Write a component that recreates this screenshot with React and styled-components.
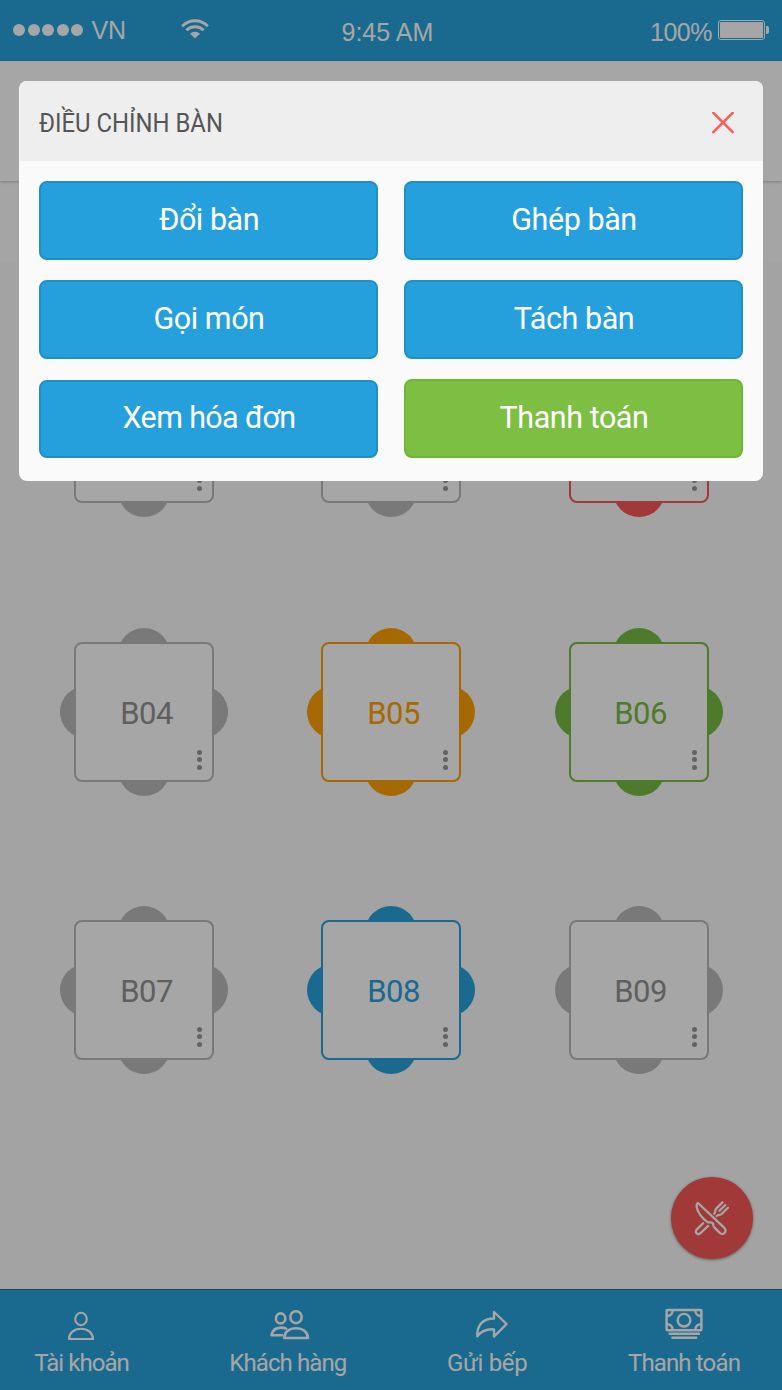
import React from 'react';
import styled, { createGlobalStyle } from 'styled-components';

const Global = createGlobalStyle`
  * { box-sizing: border-box; }
  body { margin: 0; }
`;

const tones = {
  gray: { line: '#bababa', text: '#939393' },
  red: { line: '#f75856', text: '#f75856' },
  orange: { line: '#ffa000', text: '#ffa000' },
  green: { line: '#78bc42', text: '#78bc42' },
  blue: { line: '#28a2dc', text: '#28a2dc' },
};

const Screen = styled.div`
  position: relative;
  width: 782px;
  height: 1390px;
  overflow: hidden;
  display: flex;
  flex-direction: column;
  background: #fafafa;
  font-family: Roboto, "Noto Sans", sans-serif;
`;

const StatusBar = styled.header`
  height: 61px;
  flex: none;
  display: grid;
  grid-template-columns: 328.5px auto 1fr;
  align-items: start;
  padding: 0 13px;
  background: #28a2dc;
  color: #fff;
  font: 25px/30px "Liberation Sans", sans-serif;
`;

const StatusGroup = styled.div`
  display: flex;
  justify-content: ${(p) => (p.$end ? 'flex-end' : 'flex-start')};
  padding-top: ${(p) => p.$top}px;
  letter-spacing: ${(p) => (p.$end ? '-0.5px' : 'normal')};
`;

const Signal = styled.div`
  display: flex;
  gap: 2.6px;
  margin: 9px 8px 0 0;
`;

const SignalDot = styled.i`
  width: 12px;
  height: 12px;
  border-radius: 50%;
  background: #fff;
`;

const WifiIcon = styled.svg`
  margin: 4px 0 0 55px;
`;

const BatteryIcon = styled.svg`
  margin: 2px 0 0 5px;
`;

const TitleBar = styled.div`
  height: 120px;
  flex: none;
  background: #fff;
  box-shadow: 0 1px 3px rgba(0, 0, 0, 0.25);
  z-index: 1;
`;

const FilterBar = styled.div`
  height: 81px;
  flex: none;
  background: #fefefe;
`;

const Floor = styled.main`
  flex: 1;
  display: grid;
  grid-template-columns: 247px 248px 168px;
  grid-template-rows: 279px 278px 168px;
  align-items: start;
  justify-items: start;
  padding: 87px 0 0 60px;
`;

const TableUnit = styled.div`
  position: relative;
  width: 168px;
  height: 168px;
  padding: 14px;
`;

const Chair = styled.i`
  position: absolute;
  width: 52px;
  height: 52px;
  border-radius: 50%;
  background: ${(p) => tones[p.$tone].line};
  ${(p) => ({
    top: `top: 0; left: ${p.$x}px;`,
    bottom: `bottom: 0; left: ${p.$x}px;`,
    left: 'left: 0; top: 58.4px;',
    right: 'right: 0; top: 58.4px;',
  }[p.$side])}
`;

const TableTop = styled.div`
  position: relative;
  width: 140px;
  height: 140px;
  display: flex;
  align-items: center;
  justify-content: center;
  padding: 4px 0 0 ${(p) => (p.$last ? 3 : 5)}px;
  border: 2px solid ${(p) => tones[p.$tone].line};
  border-radius: 8px;
  background: #fff;
  color: ${(p) => tones[p.$tone].text};
  font-size: 31px;
  line-height: 36px;
  letter-spacing: -0.5px;
`;

const More = styled.span`
  position: absolute;
  right: ${(p) => (p.$middle ? 11 : 10)}px;
  bottom: ${(p) => (p.$raised ? 11 : 10)}px;
  display: grid;
  gap: 2.6px;
`;

const MoreDot = styled.i`
  width: 5px;
  height: 5px;
  border-radius: 50%;
  background: #999;
`;

const Fab = styled.div`
  position: absolute;
  left: 671px;
  top: 1177px;
  width: 82px;
  height: 82px;
  border-radius: 50%;
  display: grid;
  place-items: center;
  background: #f75856;
  box-shadow: 0 1px 3px rgba(0, 0, 0, 0.45);
`;

const BottomNav = styled.nav`
  height: 101px;
  flex: none;
  display: flex;
  justify-content: space-between;
  padding: 0 42px 0 34px;
  border-top: 1px solid #16719f;
  background: #28a2dc;
  color: #fff;
`;

const NavItem = styled.div`
  width: ${(p) => p.$w}px;
  display: flex;
  flex-direction: column;
  align-items: center;
  font-size: 24px;
  line-height: 28px;
  white-space: nowrap;
`;

const NavGlyph = styled.div`
  height: 59px;
  display: flex;
  align-items: center;
  padding-top: ${(p) => p.$top}px;
  padding-left: ${(p) => Math.max(p.$dx, 0) * 2}px;
  padding-right: ${(p) => Math.max(-p.$dx, 0) * 2}px;
`;

const NavText = styled.span`
  letter-spacing: ${(p) => p.$track}px;
`;

const Overlay = styled.div`
  position: absolute;
  inset: 0;
  z-index: 2;
  background: rgba(0, 0, 0, 0.35);
`;

const Dialog = styled.section`
  position: absolute;
  left: 19px;
  top: 81px;
  z-index: 3;
  width: 744px;
  height: 400px;
  border-radius: 8px;
  overflow: hidden;
  background: #fafafa;
`;

const DialogHead = styled.div`
  height: 80px;
  display: flex;
  align-items: center;
  justify-content: space-between;
  margin-left: 1px;
  padding: 3px 29px 0 19px;
  background: #eee;
`;

const DialogTitle = styled.h1`
  margin: 0;
  font-size: 26px;
  line-height: 32px;
  font-weight: 400;
  color: #555;
  transform: scaleX(0.918);
  transform-origin: left;
  white-space: nowrap;
`;

const Actions = styled.div`
  display: grid;
  grid-template-columns: 339px 339px;
  grid-template-rows: 79px 79px 79px;
  column-gap: 26px;
  row-gap: 20px;
  padding: 20px;
`;

const Action = styled.button`
  margin: ${(p) => (p.$inset ? '1px 0 0' : '0')};
  padding: 0 0 ${(p) => (p.$inset ? 3 : 2)}px 1px;
  border: 2px solid ${(p) => (p.$green ? '#70b533' : '#1d90cb')};
  border-radius: 8px;
  background: ${(p) => (p.$green ? '#7dbf42' : '#26a0dc')};
  color: #fff;
  font: 30.5px/36px Roboto, "Noto Sans", sans-serif;
  letter-spacing: ${(p) => p.$track || -0.45}px;
`;

const Stroke = ({ w, h, sw = 2, children }) => (
  <svg width={w} height={h} viewBox={`0 0 ${w} ${h}`} fill="none" stroke="#fff" strokeWidth={sw} strokeLinecap="round" strokeLinejoin="round">
    {children}
  </svg>
);

const UserIcon = () => (
  <Stroke w={30} h={32} sw={2.1}>
    <ellipse cx="15" cy="10" rx="5.8" ry="6.2" />
    <path d="M3 30C3 24 8 19.7 15 19.7S27 24 27 30Z" />
  </Stroke>
);

const UsersIcon = () => (
  <Stroke w={44} h={33} sw={2.6}>
    <ellipse cx="28" cy="9.2" rx="5.7" ry="6" />
    <path d="M16.2 30C16.6 24 21 20.2 28 20.2S39.6 24 40 30Z" />
    <ellipse cx="12.6" cy="10.4" rx="4.7" ry="5" />
    <path d="M18 20.6C16.3 19.7 14.7 19.5 13 19.6C7.8 19.8 4.2 22.6 3.5 27.2H14" />
  </Stroke>
);

const SendIcon = () => (
  <Stroke w={36} h={32} sw={2.4}>
    <path d="M20 4L32.6 16L20 28.6V21.4C12 20.8 7 23.4 3.3 28.3C2.8 17 9 10.5 20 10.5Z" />
  </Stroke>
);

const MoneyIcon = () => (
  <Stroke w={40} h={32} sw={2.4}>
    <rect x="2.6" y="2" width="34.8" height="20.2" rx="0.8" />
    <circle cx="20" cy="12.2" r="6.3" />
    <path d="M8.6 2.5C8.6 5.8 6.4 8 3 8M31.4 2.5C31.4 5.8 33.6 8 37 8M3 16.2C6.4 16.2 8.6 18.4 8.6 21.7M37 16.2C33.6 16.2 31.4 18.4 31.4 21.7" />
    <path d="M5.6 25.8H35M8.4 29.7H32.2" />
  </Stroke>
);

const CutleryIcon = () => (
  <Stroke w={40} h={40} sw={2.3}>
    <path d="M6 5C4.2 5.4 4.5 8.3 5 10.3C6.5 16 10.5 20.5 15.6 24.1C17.8 25 20.3 23.5 21.1 26C21.4 27.6 21.2 28.2 22.6 29.6L27.6 34.8C28.8 36 31 36.4 32.4 35.2C34 33.7 33.7 31.3 32.6 30.2Z" />
    <path d="M11.2 25.2L4.9 31.3C3.6 32.7 3.4 34.4 4.6 35.4C5.7 36.4 7.4 36.2 8.6 35L16.2 27.9" />
    <path d="M30.5 4.2L24.2 10.6C22.6 12.3 24.1 13.8 22.2 15.7M36 9.7L29.8 15.8C28 17.6 26.6 16 24.6 18M33.3 7L27.4 12.8" />
  </Stroke>
);

const tables = [
  { tone: 'gray' }, { tone: 'gray' }, { tone: 'red' },
  { name: 'B04', tone: 'gray' }, { name: 'B05', tone: 'orange' }, { name: 'B06', tone: 'green' },
  { name: 'B07', tone: 'gray' }, { name: 'B08', tone: 'blue' }, { name: 'B09', tone: 'gray' },
];

const Table = ({ name, tone, index }) => {
  const col = index % 3;
  return (
    <TableUnit>
      {['top', 'bottom', 'left', 'right'].map((s) => (
        <Chair key={s} $side={s} $tone={tone} $x={col === 2 ? 57.5 : 58.4} />
      ))}
      <TableTop $tone={tone} $last={col === 2}>
        {name}
        <More $middle={col === 1} $raised={index > 5}><MoreDot /><MoreDot /><MoreDot /></More>
      </TableTop>
    </TableUnit>
  );
};

const navItems = [
  { label: 'Tài khoản', Icon: UserIcon, w: 95, track: -0.95, dx: -0.5, top: 11 },
  { label: 'Khách hàng', Icon: UsersIcon, w: 117, track: -0.9, dx: 2, top: 9 },
  { label: 'Gửi bếp', Icon: SendIcon, w: 81, track: -0.35, dx: 5, top: 8 },
  { label: 'Thanh toán', Icon: MoneyIcon, w: 112, track: -0.85, dx: 0, top: 9 },
];

export default function App() {
  return (
    <Screen>
      <Global />
      <StatusBar>
        <StatusGroup $top={15}>
          <Signal>{[0, 1, 2, 3, 4].map((i) => <SignalDot key={i} />)}</Signal>
          VN
          <WifiIcon width="28" height="20" viewBox="0 0 28 20" fill="none" stroke="#fff" strokeWidth="2.9">
            <path d="M1.2 7.2C8.5 0 19.5 0 26.8 7.2" />
            <path d="M5.4 11.3C10.2 6.6 17.8 6.6 22.6 11.3" />
            <path d="M9 14.8C11.6 12 16.4 12 19 14.8L14 19.5Z" fill="#fff" stroke="none" />
          </WifiIcon>
        </StatusGroup>
        <StatusGroup $top={17}>9:45 AM</StatusGroup>
        <StatusGroup $top={17} $end>
          100%
          <BatteryIcon width="52" height="22" viewBox="0 0 52 22">
            <rect x="1.5" y="1.5" width="46" height="19" rx="2.5" fill="none" stroke="#fff" />
            <rect x="3" y="3" width="43" height="16" rx="1" fill="#fff" />
            <path d="M49 7H50Q52 7 52 9V13Q52 15 50 15H49Z" fill="#fff" />
          </BatteryIcon>
        </StatusGroup>
      </StatusBar>
      <TitleBar />
      <FilterBar />
      <Floor>
        {tables.map((t, i) => <Table key={i} index={i} {...t} />)}
      </Floor>
      <Fab><CutleryIcon /></Fab>
      <BottomNav>
        {navItems.map(({ label, Icon, w, track, dx, top }) => (
          <NavItem key={label} $w={w}>
            <NavGlyph $dx={dx} $top={top}><Icon /></NavGlyph>
            <NavText $track={track}>{label}</NavText>
          </NavItem>
        ))}
      </BottomNav>
      <Overlay />
      <Dialog>
        <DialogHead>
          <DialogTitle>ĐIỀU CHỈNH BÀN</DialogTitle>
          <svg width="22" height="22" viewBox="0 0 22 22" stroke="#ff5a54" strokeWidth="2.5" strokeLinecap="round">
            <path d="M1.3 0.8L20.7 20.2M20.7 0.8L1.3 20.2" />
          </svg>
        </DialogHead>
        <Actions>
          <Action>Đổi bàn</Action>
          <Action>Ghép bàn</Action>
          <Action>Gọi món</Action>
          <Action>Tách bàn</Action>
          <Action $inset $track={-0.65}>Xem hóa đơn</Action>
          <Action $green>Thanh toán</Action>
        </Actions>
      </Dialog>
    </Screen>
  );
}
